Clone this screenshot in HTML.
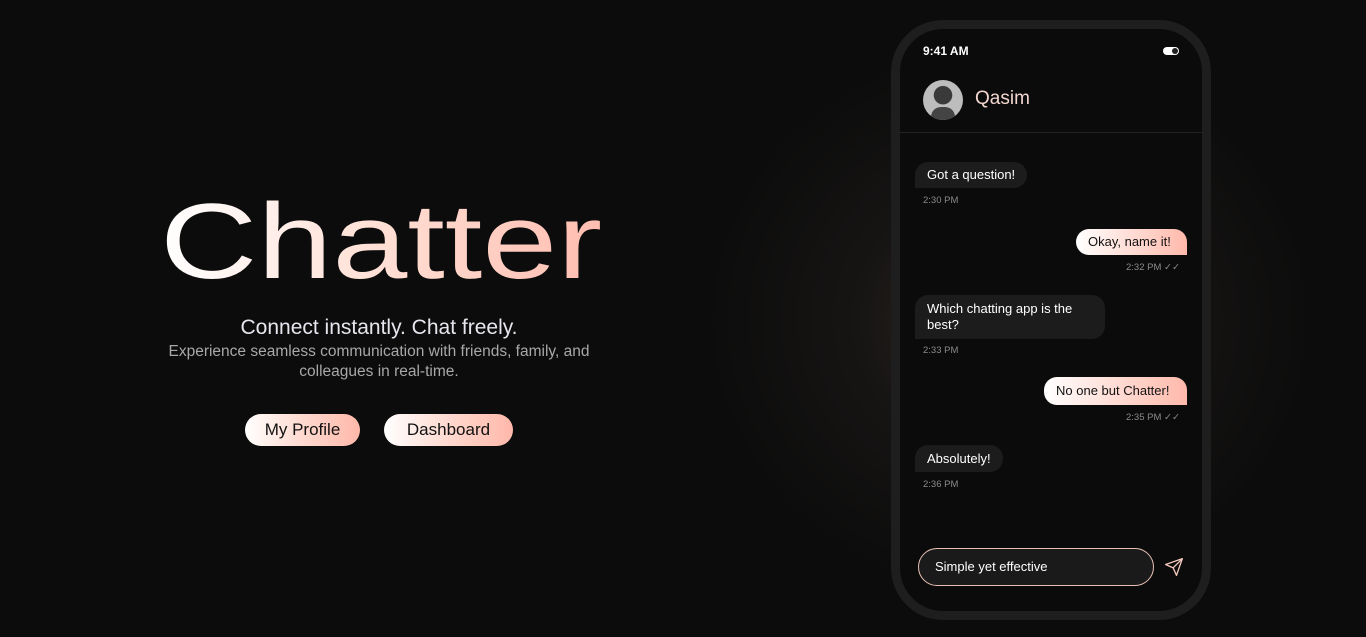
<!DOCTYPE html>
<html><head><meta charset="utf-8"><style>
*{margin:0;padding:0;box-sizing:border-box}
body{width:1366px;height:637px;overflow:hidden;background:#0c0c0c;font-family:"Liberation Sans",sans-serif;position:relative}
.glow{position:absolute;left:700px;top:40px;width:620px;height:560px;border-radius:50%;background:radial-gradient(ellipse at center,rgba(70,60,52,.6) 0%,rgba(40,35,32,.38) 35%,rgba(12,12,12,0) 70%)}
.title{position:absolute;left:160px;top:188px;font-size:107px;line-height:1;transform:scaleX(1.26);transform-origin:left top;background:linear-gradient(90deg,#fff 0%,#ffe2d8 45%,#ffbdb0 100%);-webkit-background-clip:text;background-clip:text;color:transparent}
.sub{position:absolute;left:130px;width:498px;text-align:center;color:#e6e6ee;font-size:21px;top:316px}
.desc{position:absolute;left:130px;width:498px;text-align:center;color:#a8a8a8;font-size:15.5px;line-height:20px;top:342px}
.btn{position:absolute;top:414px;height:32px;border-radius:16px;background:linear-gradient(90deg,#fff 0%,#ffd9cf 50%,#ffb8aa 100%);color:#111;font-size:17px;line-height:32px;text-align:center}
.phone{position:absolute;left:891px;top:20px;width:320px;height:600px;border-radius:52px;border:9px solid #1e1e1e;background:#0b0b0b}
.abs{position:absolute}
.bub{position:absolute;font-size:13px;padding:0 12px;line-height:26px;border-radius:13px;color:#fff;background:#1c1c1c;border-bottom-left-radius:0}
.me{color:#111;background:linear-gradient(90deg,#fff,#ffb9ab);border-radius:13px;border-bottom-right-radius:0}
.t{position:absolute;font-size:9.5px;color:#8a8a8a}
</style></head><body>
<div class="glow"></div>
<div class="title">Chatter</div>
<div class="sub">Connect instantly. Chat freely.</div>
<div class="desc">Experience seamless communication with friends, family, and<br>colleagues in real-time.</div>
<div class="btn" style="left:245px;width:115px">My Profile</div>
<div class="btn" style="left:384px;width:129px">Dashboard</div>

<div class="phone"></div>
<div class="abs" style="left:923px;top:44px;color:#fff;font-size:12px;font-weight:bold">9:41 AM</div>
<div class="abs" style="left:1163px;top:47px;width:16px;height:8px;border-radius:4px;background:#fff"><div style="position:absolute;right:1px;top:1px;width:6px;height:6px;border-radius:3px;background:#222"></div></div>
<div class="abs" style="left:923px;top:80px;width:40px;height:40px;border-radius:50%;background:radial-gradient(circle at 50% 38%,#3a3a3a 0 28%,#bdbdbd 30% 100%);overflow:hidden"><div style="position:absolute;left:8px;top:27px;width:24px;height:16px;border-radius:10px 10px 0 0;background:#444"></div></div>
<div class="abs" style="left:975px;top:88px;font-size:19px;color:#f2d6cf">Qasim</div>
<div class="abs" style="left:900px;top:132px;width:303px;height:1px;background:#222"></div>

<div class="bub" style="left:915px;top:162px">Got a question!</div>
<div class="t" style="left:923px;top:195px">2:30 PM</div>
<div class="bub me" style="left:1076px;top:229px;width:111px">Okay, name it!</div>
<div class="t" style="left:1126px;top:262px">2:32 PM ✓✓</div>
<div class="bub" style="left:915px;top:295px;width:190px;line-height:16px;padding:6px 12px">Which chatting app is the best?</div>
<div class="t" style="left:923px;top:345px">2:33 PM</div>
<div class="bub me" style="left:1044px;top:377px;width:143px;line-height:28px">No one but Chatter!</div>
<div class="t" style="left:1126px;top:412px">2:35 PM ✓✓</div>
<div class="bub" style="left:915px;top:445px;line-height:27px">Absolutely!</div>
<div class="t" style="left:923px;top:479px">2:36 PM</div>

<div class="abs" style="left:918px;top:548px;width:236px;height:38px;border-radius:19px;border:1px solid #e8c0b4;background:#1a1a1a;color:#fff;font-size:13px;line-height:36px;padding-left:16px">Simple yet effective</div>
<svg class="abs" style="left:1164px;top:557px" width="20" height="20" viewBox="0 0 24 24" fill="none" stroke="#f3c9bd" stroke-width="1.6" stroke-linejoin="round"><path d="M22 2L2 9l9 4 4 9z"/><path d="M22 2L11 13"/></svg>
</body></html>
